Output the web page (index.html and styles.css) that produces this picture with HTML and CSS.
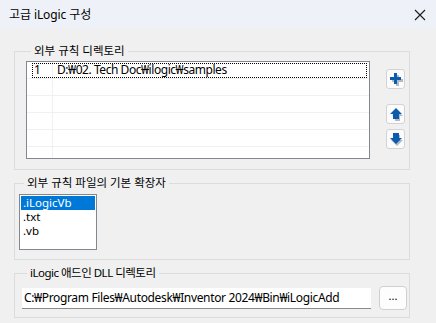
FILE: index.html
```html
<!DOCTYPE html>
<html lang="ko">
<head>
<meta charset="utf-8">
<title>고급 iLogic 구성</title>
<link rel="stylesheet" href="styles.css">
</head>
<body>
<div class="dialog">
  <div class="titlebar">
    <span class="title">고급 iLogic 구성</span>
    <svg class="close" width="12" height="12" viewBox="0 0 12 12"><path d="M1 1 L11 11 M11 1 L1 11" stroke="#1a1a1a" stroke-width="1.1" fill="none"/></svg>
  </div>
  <div class="content">
    <fieldset class="group g1">
      <legend>외부 규칙 디렉토리</legend>
      <div class="grid-list">
        <div class="row first"><span class="c1">1</span><span class="c2">D:₩02. Tech Doc₩ilogic₩samples</span></div>
        <div class="row"><span class="c1"></span><span class="c2"></span></div>
        <div class="row"><span class="c1"></span><span class="c2"></span></div>
        <div class="row"><span class="c1"></span><span class="c2"></span></div>
        <div class="row"><span class="c1"></span><span class="c2"></span></div>
        <div class="row last"><span class="c1"></span><span class="c2"></span></div>
      </div>
      <div class="side">
        <button class="ibtn add" type="button">
          <svg width="14" height="14" viewBox="0 0 14 14"><path d="M6 2h3v4h4v3H9v4H6V9H2V6h4z" fill="#5a6b80" opacity=".45" transform="translate(1,1)"/><path d="M5 1h3v4h4v3H8v4H5V8H1V5h4z" fill="#0b5cad"/></svg>
        </button>
        <button class="ibtn up" type="button">
          <svg width="14" height="14" viewBox="0 0 14 14"><path d="M7 2l6 6H10v5H5V8H2z" fill="#5a6b80" opacity=".45" transform="translate(1,1)"/><path d="M6.5 1l6 6H9.5v5h-6V7H.5z" fill="#0b5cad" transform="translate(0.5,0)"/></svg>
        </button>
        <button class="ibtn down" type="button">
          <svg width="14" height="14" viewBox="0 0 14 14"><path d="M5 2h5v5h3l-6 6-6-6h4z" fill="#5a6b80" opacity=".45" transform="translate(1,1)"/><path d="M4 1h6v5h3l-6 6-6-6h3z" fill="#0b5cad"/></svg>
        </button>
      </div>
    </fieldset>
    <fieldset class="group g2">
      <legend>외부 규칙 파일의 기본 확장자</legend>
      <div class="listbox">
        <div class="item selected">.iLogicVb</div>
        <div class="item">.txt</div>
        <div class="item">.vb</div>
      </div>
    </fieldset>
    <fieldset class="group g3">
      <legend>iLogic 애드인 DLL 디렉토리</legend>
      <div class="textbox">C:₩Program Files₩Autodesk₩Inventor 2024₩Bin₩iLogicAdd</div>
      <button class="browse" type="button">...</button>
    </fieldset>
  </div>
</div>
</body>
</html>
```
FILE: styles.css
```css
html, body {
  margin: 0;
  padding: 0;
}
body {
  width: 436px;
  height: 323px;
  overflow: hidden;
  background: #f0f0f0;
  font-family: "Noto Sans", "Noto Sans CJK KR", sans-serif;
  font-size: 12px;
  color: #000;
}
.dialog {
  display: flex;
  flex-direction: column;
}
.titlebar {
  height: 29px;
  background: #eef2f8;
  display: flex;
  align-items: center;
  justify-content: space-between;
  padding: 0 10px 0 9px;
}
.title {
  font-size: 12px;
  line-height: 16px;
  padding-top: 1px;
  letter-spacing: -0.1px;
}
.close {
  display: block;
  margin-top: 1px;
}
.content {
  padding: 14px 26px 0 14px;
  display: flex;
  flex-direction: column;
}
.group {
  margin: 0;
  border: 1px solid #dcdcdc;
  min-width: 0;
}
.group legend {
  font-size: 11.5px;
  line-height: 16px;
  padding: 0 3px;
  margin-left: 5px;
}
.g3 legend {
  letter-spacing: -0.5px;
}
.g1 {
  display: flex;
  padding: 2px 4px 10px 11px;
  gap: 16px;
}
.grid-list {
  width: 343px;
  height: 96px;
  border: 1px solid #828790;
  background: #fff;
  display: flex;
  flex-direction: column;
  overflow: hidden;
}
.row {
  display: flex;
  height: 16px;
  border-bottom: 1px solid #f0f0f0;
  flex: none;
  line-height: 16px;
  position: relative;
}
.row .c1 {
  width: 26px;
  border-right: 1px solid #f0f0f0;
  padding-left: 7px;
  box-sizing: border-box;
  flex: none;
}
.row .c2 {
  padding-left: 4px;
  flex: 1;
  letter-spacing: -0.45px;
}
.row.first::after {
  content: "";
  position: absolute;
  left: 5px;
  top: 1px;
  right: 2px;
  bottom: 0;
  border: 1px dotted #000;
}
.side {
  display: flex;
  flex-direction: column;
  padding-top: 8px;
}
.ibtn {
  width: 19px;
  height: 20px;
  padding: 0;
  margin: 0;
  border: 1px solid #d3d3d3;
  border-radius: 3px;
  background: #fbfbfb;
  display: flex;
  align-items: center;
  justify-content: center;
}
.ibtn svg {
  display: block;
}
.ibtn.up {
  margin-top: 15px;
}
.ibtn.down {
  margin-top: 5px;
}
.g2 {
  margin-top: 5px;
  padding: 3px 4px 9px 4px;
}
.listbox {
  box-sizing: border-box;
  width: 78px;
  height: 56px;
  border: 1px solid #828790;
  background: #fff;
  padding: 1px;
}
.item {
  height: 14px;
  line-height: 14px;
  font-size: 11.5px;
  padding-left: 2px;
}
.item.selected {
  background: #0078d7;
  color: #fff;
}
.g3 {
  margin-top: 5px;
  padding: 5px 2px 7px 7px;
  display: flex;
  align-items: center;
  gap: 8px;
}
.textbox {
  width: 348px;
  height: 20px;
  line-height: 20px;
  background: #fff;
  border-bottom: 1px solid #8a8a8a;
  padding-left: 2px;
  white-space: nowrap;
  overflow: hidden;
  letter-spacing: -0.35px;
}
.browse {
  width: 28px;
  height: 24px;
  padding: 0 0 4px;
  margin: 0;
  border: 1px solid #cfcfcf;
  border-radius: 4px;
  background: #fdfdfd;
  font-family: "Noto Sans", sans-serif;
  font-size: 11px;
  color: #000;
  line-height: 12px;
}
```
